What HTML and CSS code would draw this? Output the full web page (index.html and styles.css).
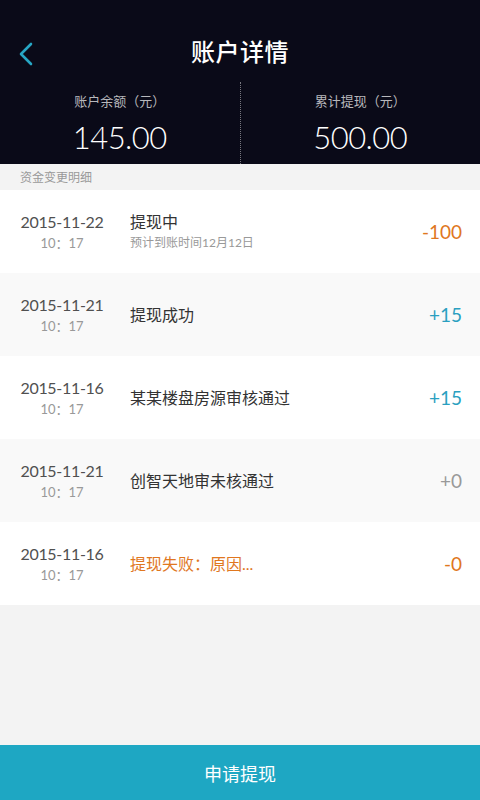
FILE: index.html
```html
<!DOCTYPE html>
<html lang="zh-CN">
<head>
<meta charset="utf-8">
<title>账户详情</title>
<link rel="stylesheet" href="styles.css">
</head>
<body>
<div class="page">
  <header class="top">
    <div class="nav">
      <a class="back" href="#" aria-label="返回">
        <svg width="16" height="24" viewBox="0 0 16 24"><path d="M12 2 L2 12 L12 22" fill="none" stroke="#27a6c4" stroke-width="2.6" stroke-linecap="round" stroke-linejoin="round"/></svg>
      </a>
      <h1 class="title">账户详情</h1>
    </div>
    <div class="summary">
      <div class="stat">
        <div class="stat-label">账户余额（元）</div>
        <div class="stat-value">145.00</div>
      </div>
      <div class="divider"></div>
      <div class="stat">
        <div class="stat-label">累计提现（元）</div>
        <div class="stat-value">500.00</div>
      </div>
    </div>
  </header>
  <div class="section">资金变更明细</div>
  <ul class="list">
    <li class="row">
      <div class="when"><div class="date">2015-11-22</div><div class="time">10：17</div></div>
      <div class="info"><div class="name">提现中</div><div class="sub">预计到账时间12月12日</div></div>
      <div class="amt orange">-100</div>
    </li>
    <li class="row alt">
      <div class="when"><div class="date">2015-11-21</div><div class="time">10：17</div></div>
      <div class="info"><div class="name">提现成功</div></div>
      <div class="amt blue">+15</div>
    </li>
    <li class="row">
      <div class="when"><div class="date">2015-11-16</div><div class="time">10：17</div></div>
      <div class="info"><div class="name">某某楼盘房源审核通过</div></div>
      <div class="amt blue">+15</div>
    </li>
    <li class="row alt">
      <div class="when"><div class="date">2015-11-21</div><div class="time">10：17</div></div>
      <div class="info"><div class="name">创智天地审未核通过</div></div>
      <div class="amt gray">+0</div>
    </li>
    <li class="row">
      <div class="when"><div class="date">2015-11-16</div><div class="time">10：17</div></div>
      <div class="info"><div class="name orange">提现失败：原因...</div></div>
      <div class="amt orange">-0</div>
    </li>
  </ul>
  <div class="fill"></div>
  <button class="apply">申请提现</button>
</div>
</body>
</html>
```
FILE: styles.css
```css
* { box-sizing: border-box; margin: 0; padding: 0; }
html, body { height: 100%; }
body {
  font-family: "Lato", "Noto Sans CJK SC", sans-serif;
  background: #f3f3f3;
  color: #333;
}
.page { display: flex; flex-direction: column; height: 800px; }
.top { background: #0a0a18; color: #fff; }
.nav {
  height: 82px;
  padding-top: 22px;
  display: flex;
  align-items: center;
  justify-content: center;
  position: relative;
}
.back {
  position: absolute;
  left: 19px;
  top: 42px;
  display: block;
  width: 16px;
  height: 24px;
}
.back svg { display: block; }
.title { font-size: 24px; font-weight: 500; letter-spacing: 0.5px; line-height: 30px; margin-top: -2px; font-family: "Noto Sans CJK SC", sans-serif; }
.summary { display: flex; height: 82px; }
.stat {
  flex: 1;
  display: flex;
  flex-direction: column;
  align-items: center;
  padding-top: 10px;
}
.stat-label { font-size: 13px; color: #b8b8bc; line-height: 18px; }
.stat-value { font-size: 31px; font-weight: 300; line-height: 40px; margin-top: 7px; letter-spacing: -0.5px; }
.divider { width: 0; border-left: 1px dotted #77777f; }
.section {
  height: 26px;
  line-height: 28px;
  padding-left: 20px;
  font-size: 12px;
  color: #999;
  background: #f3f3f3;
}
.list { list-style: none; }
.row {
  height: 83px;
  display: flex;
  align-items: center;
  background: #fff;
  padding: 0 18px 0 18px;
}
.row.alt { background: #f9f9f9; }
.when { width: 88px; display: flex; flex-direction: column; align-items: center; margin-right: 24px; white-space: nowrap; }
.date { font-size: 16px; color: #505050; line-height: 22px; letter-spacing: -0.3px; }
.time { font-size: 13px; color: #999; line-height: 20px; }
.info { flex: 1; white-space: nowrap; }
.name { font-size: 16px; color: #333; line-height: 22px; }
.sub { font-size: 12px; color: #999; line-height: 20px; }
.amt { font-size: 19px; line-height: 24px; }
.orange { color: #e0771f; }
.blue { color: #2a9fc0; }
.gray { color: #999; }
.name.orange { color: #e0771f; }
.fill { flex: 1; background: #f3f3f3; }
.apply {
  height: 55px;
  border: 0;
  background: #1ea7c3;
  color: #fff;
  font-family: "Noto Sans CJK SC", sans-serif;
  font-size: 18px;
  width: 100%;
}
```
